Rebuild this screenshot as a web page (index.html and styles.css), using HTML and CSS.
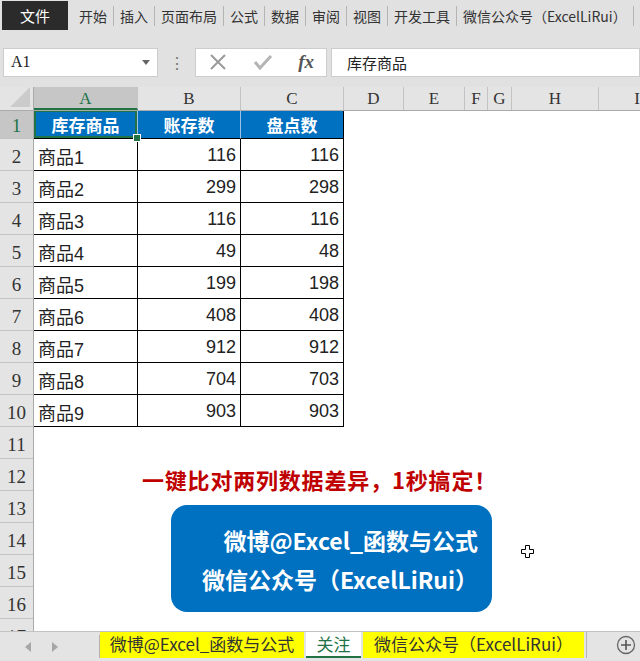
FILE: index.html
```html
<!DOCTYPE html>
<html lang="zh-CN">
<head>
  <meta charset="UTF-8">
  <title>库存盘点</title>
  <link rel="stylesheet" href="styles.css">
</head>
<body>
  <div class="app">
    <!-- menu tabs -->
    <div class="ribbon">
      <div class="tab file">文件</div>
      <div class="tab">开始</div>
      <div class="tab">插入</div>
      <div class="tab">页面布局</div>
      <div class="tab">公式</div>
      <div class="tab">数据</div>
      <div class="tab">审阅</div>
      <div class="tab">视图</div>
      <div class="tab">开发工具</div>
      <div class="tab">微信公众号<span class="fw open">（</span>ExcelLiRui<span class="fw">）</span></div>
    </div>

    <!-- name box + formula input -->
    <div class="formula-bar">
      <div class="name-box">
        <span>A1</span>
        <svg class="caret" width="8" height="5" viewBox="0 0 8 5"><path d="M0 0h8L4 5z" fill="#666"/></svg>
      </div>
      <div class="grip">⋮</div>
      <div class="fx-buttons">
        <svg width="18" height="18" viewBox="0 0 18 18"><path d="M2 2l14 14M16 2L2 16" stroke="#9a9a9a" stroke-width="2"/></svg>
        <svg width="20" height="18" viewBox="0 0 20 18"><path d="M2 9l5 6L18 3" stroke="#b4b4b4" stroke-width="3" fill="none"/></svg>
        <span class="fx">fx</span>
      </div>
      <div class="formula-input">库存商品</div>
    </div>

    <div class="sheet">
      <div class="col-heads">
        <div class="corner"><span></span></div>
        <div class="col-head active" style="width:104px">A</div>
        <div class="col-head" style="width:103px">B</div>
        <div class="col-head" style="width:103px">C</div>
        <div class="col-head" style="width:60px">D</div>
        <div class="col-head" style="width:61px">E</div>
        <div class="col-head" style="width:23px">F</div>
        <div class="col-head" style="width:24px">G</div>
        <div class="col-head" style="width:87px">H</div>
        <div class="col-head last">I</div>
      </div>

      <div class="sheet-body">
        <div class="row-heads">
          <div class="row-head first active">1</div>
          <div class="row-head">2</div>
          <div class="row-head">3</div>
          <div class="row-head">4</div>
          <div class="row-head">5</div>
          <div class="row-head">6</div>
          <div class="row-head">7</div>
          <div class="row-head">8</div>
          <div class="row-head">9</div>
          <div class="row-head">10</div>
          <div class="row-head">11</div>
          <div class="row-head">12</div>
          <div class="row-head">13</div>
          <div class="row-head">14</div>
          <div class="row-head">15</div>
          <div class="row-head">16</div>
          <div class="row-head">17</div>
        </div>

        <div class="canvas">
          <div class="data">
            <div class="cell head active">库存商品</div>
            <div class="cell head">账存数</div>
            <div class="cell head">盘点数</div>

            <div class="cell">商品1</div><div class="cell num">116</div><div class="cell num">116</div>
            <div class="cell">商品2</div><div class="cell num">299</div><div class="cell num">298</div>
            <div class="cell">商品3</div><div class="cell num">116</div><div class="cell num">116</div>
            <div class="cell">商品4</div><div class="cell num">49</div><div class="cell num">48</div>
            <div class="cell">商品5</div><div class="cell num">199</div><div class="cell num">198</div>
            <div class="cell">商品6</div><div class="cell num">408</div><div class="cell num">408</div>
            <div class="cell">商品7</div><div class="cell num">912</div><div class="cell num">912</div>
            <div class="cell">商品8</div><div class="cell num">704</div><div class="cell num">703</div>
            <div class="cell">商品9</div><div class="cell num">903</div><div class="cell num">903</div>
          </div>

          <p class="headline">一键比对两列数据差异<span class="fw">，</span>1秒搞定<span class="fw">！</span></p>

          <div class="promo">
            <div>微博@Excel_函数与公式</div>
            <div>微信公众号（ExcelLiRui）</div>
          </div>

          <!-- mouse pointer -->
          <svg class="pointer" width="13" height="13" viewBox="0 0 13 13">
            <path d="M4.5 0.5h4v4h4v4h-4v4h-4v-4h-4v-4h4z" fill="#fff" stroke="#000" stroke-width="1"/>
          </svg>
        </div>
      </div>
    </div>

    <!-- sheet tabs -->
    <div class="sheet-tabs">
      <div class="nav">
        <svg width="6" height="10" viewBox="0 0 6 10"><path d="M6 0v10L0 5z" fill="#a6a6a6"/></svg>
        <svg width="6" height="10" viewBox="0 0 6 10"><path d="M0 0v10l6-5z" fill="#a6a6a6"/></svg>
      </div>
      <div class="sheet-tab marked" style="width:204px">微博@Excel_函数与公式</div>
      <div class="sheet-tab current">关注</div>
      <div class="sheet-tab marked" style="width:221px">微信公众号<span class="fw open">（</span>ExcelLiRui<span class="fw">）</span></div>
      <div class="tabs-rest">
        <svg width="20" height="20" viewBox="0 0 20 20">
          <circle cx="10" cy="10" r="8.5" fill="none" stroke="#666" stroke-width="1.3"/>
          <path d="M10 5v10M5 10h10" stroke="#555" stroke-width="1.6"/>
        </svg>
      </div>
    </div>
  </div>
</body>
</html>
```

FILE: styles.css
```css
* {
  box-sizing: border-box;
}

body {
  margin: 0;
  width: 640px;
  height: 661px;
  overflow: hidden;
  font-family: "Noto Sans CJK SC", sans-serif;
  background: #e1e1e1;
  color: #222;
}

/* full-width punctuation keeps its whole em box */
.fw {
  display: inline-block;
  width: 1em;
  text-align: left;
}

.fw.open {
  text-align: right;
}

.app {
  height: 661px;
  display: flex;
  flex-direction: column;
}

/* ribbon */
.ribbon {
  height: 32px;
  display: flex;
  align-items: center;
  padding-left: 2px;
  font-size: 14px;
  color: #333;
  white-space: nowrap;
}

.ribbon .tab {
  flex-shrink: 0;
  padding: 0 6px;
  line-height: 20px;
  border-right: 1px solid #b4b4b4;
}

.ribbon .tab.file {
  width: 66px;
  height: 29px;
  line-height: 29px;
  margin-right: 5px;
  text-align: center;
  background: #2b2b2b;
  color: #fff;
  font-size: 15px;
  border: none;
}

/* formula bar */
.formula-bar {
  height: 56px;
  display: flex;
  align-items: flex-start;
  padding: 16px 0 0 3px;
}

.name-box,
.fx-buttons,
.formula-input {
  height: 29px;
  background: #fff;
  border: 1px solid #cdcdcd;
  display: flex;
  align-items: center;
}

.name-box {
  width: 155px;
  justify-content: space-between;
  padding: 0 7px;
  font-family: "Liberation Serif", serif;
  font-size: 16px;
}

.grip {
  width: 37px;
  text-align: center;
  font-size: 16px;
  line-height: 29px;
  color: #777;
}

.fx-buttons {
  width: 132px;
  justify-content: space-between;
  padding: 0 12px 0 13px;
}

.fx {
  font-family: "Liberation Serif", serif;
  font-style: italic;
  font-weight: bold;
  font-size: 19px;
  color: #555;
}

.formula-input {
  flex: 1;
  margin-left: 4px;
  padding-left: 15px;
  font-size: 15px;
}

/* sheet */
.sheet {
  display: flex;
  flex-direction: column;
}

.col-heads {
  height: 24px;
  display: flex;
  background: #e4e4e4;
  border-bottom: 1px solid #ababab;
}

.corner {
  width: 34px;
  border-right: 1px solid #ababab;
  position: relative;
}

.corner span {
  position: absolute;
  right: 3px;
  bottom: 3px;
  width: 20px;
  height: 20px;
  background: #cbcbcb;
  clip-path: polygon(100% 0, 100% 100%, 0 100%);
}

.col-head {
  border-right: 1px solid #c3c3c3;
  text-align: center;
  line-height: 23px;
  font-family: "Liberation Serif", serif;
  font-size: 17px;
  color: #333;
}

.col-head.active {
  background: #c6c6c6;
  color: #217346;
  border-bottom: 2px solid #217346;
}

.col-head.last {
  flex: 1;
  text-align: right;
  border-right: none;
}

.sheet-body {
  height: 520px;
  display: flex;
  overflow: hidden;
}

.row-heads {
  width: 34px;
  flex-shrink: 0;
  background: #e4e4e4;
  border-right: 1px solid #ababab;
}

.row-head {
  height: 32px;
  border-bottom: 1px solid #c3c3c3;
  text-align: center;
  line-height: 35px;
  font-family: "Liberation Serif", serif;
  font-size: 19px;
  color: #333;
}

.row-head.first {
  height: 28px;
  line-height: 30px;
}

.row-head.active {
  background: #c6c6c6;
  color: #217346;
}

.canvas {
  flex: 1;
  background: #fff;
  position: relative;
}

/* data block A1:C10 */
.data {
  display: grid;
  grid-template-columns: 104px 103px 103px;
  grid-template-rows: 28px repeat(9, 32px);
  width: 310px;
}

.cell {
  border-right: 1px solid #000;
  border-bottom: 1px solid #000;
  display: flex;
  align-items: center;
  padding: 2px 4px 0;
  font-family: "Liberation Sans", "Noto Sans CJK SC", sans-serif;
  font-size: 18px;
  white-space: nowrap;
}

.cell.num {
  justify-content: flex-end;
}

.cell.head {
  justify-content: center;
  padding-top: 0;
  background: #0070c0;
  color: #fff;
  font-weight: bold;
  font-size: 17px;
  border-right-color: #9cc2e5;
}

.cell.head:nth-child(3) {
  border-right-color: #000;
}

.cell.active {
  position: relative;
}

.cell.active::after {
  content: "";
  position: absolute;
  inset: -1px 0 0 0;
  border: 2px solid #217346;
}

.cell.active::before {
  content: "";
  position: absolute;
  right: -4px;
  bottom: -4px;
  width: 6px;
  height: 6px;
  background: #217346;
  border: 1px solid #fff;
  z-index: 1;
}

.headline {
  margin: 39px 0 0 108px;
  line-height: 26px;
  font-size: 22px;
  font-weight: bold;
  letter-spacing: 0.8px;
  color: #c00000;
  white-space: nowrap;
}

.promo {
  width: 321px;
  height: 107px;
  margin: 13px 0 0 137px;
  padding: 16px 14px 0 0;
  border-radius: 16px;
  background: #0070c0;
  color: #fff;
  text-align: right;
  font-size: 23px;
  font-weight: bold;
  line-height: 39px;
  white-space: nowrap;
}

.pointer {
  position: absolute;
  left: 487px;
  top: 434px;
}

/* sheet tab strip */
.sheet-tabs {
  flex: 1;
  display: flex;
  align-items: stretch;
  padding-bottom: 3px;
  border-top: 1px solid #c3c3c3;
  background: #e4e4e4;
  font-size: 17px;
  white-space: nowrap;
}

.nav {
  width: 100px;
  display: flex;
  align-items: center;
  padding-left: 25px;
  gap: 21px;
  border-right: 1px solid #b4b4b4;
  margin: 3px 0 0;
}

.sheet-tab {
  flex-shrink: 0;
  text-align: center;
  line-height: 24px;
  margin-right: 2px;
  color: #333;
}

.sheet-tab.marked {
  background: #ffff00;
}

.sheet-tab.current {
  width: 55px;
  background: #fff;
  color: #217346;
  border-bottom: 2px solid #217346;
}

.tabs-rest {
  flex: 1;
  display: flex;
  align-items: center;
  justify-content: flex-end;
  padding-right: 4px;
  border-left: 1px solid #b4b4b4;
}
```
